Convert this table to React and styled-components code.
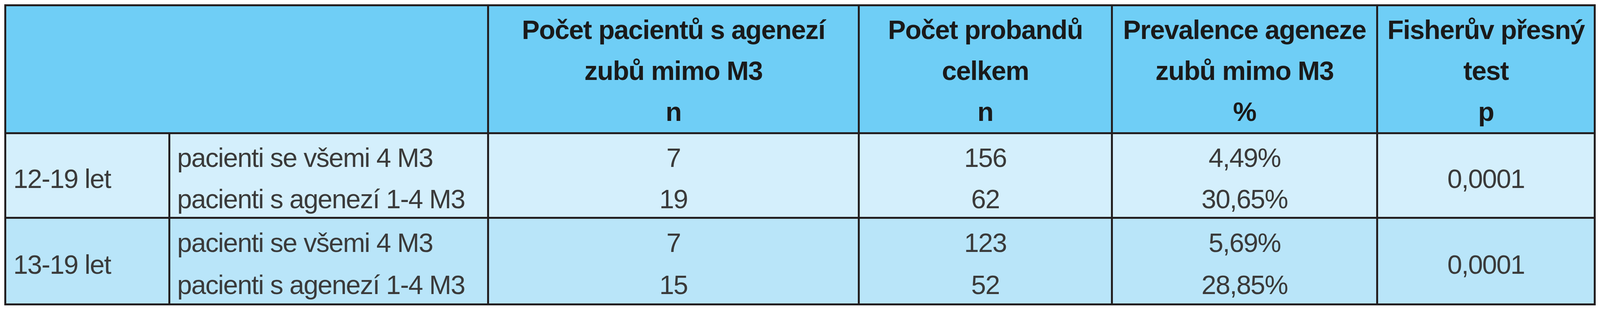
import React from "react"
import styled, { createGlobalStyle } from "styled-components"

const GlobalStyle = createGlobalStyle`
    html, body {
        margin: 0;
        padding: 0;
        background: #ffffff;
    }
    body {
        padding: 11px;
        font-family: "Liberation Sans", Arial, sans-serif;
    }
`

// column widths taken from the reference, used as proportions so the table fills the page
const Table = styled.div`
    display: grid;
    grid-template-columns:
        minmax(0, 423fr) minmax(0, 828fr) minmax(0, 963fr)
        minmax(0, 656fr) minmax(0, 688fr) minmax(0, 563fr);
    grid-template-rows: 323px 212px 217px;
    gap: 5px;
    background: #231f20;
    border: 5px solid #231f20;
`

const HeadCell = styled.div`
    grid-column: ${props => props.$span ? `span ${props.$span}` : "auto"};
    background: #6fcef6;
    color: #1a1a1a;
    font-weight: bold;
    font-size: 68px;
    line-height: 105px;
    letter-spacing: -0.02em;
    text-align: center;
    padding-top: 8px;
    box-sizing: border-box;
    white-space: nowrap;
    overflow: hidden;
`

const Cell = styled.div`
    background: ${props => props.$tone === "dark" ? "#b9e5f9" : "#d4effc"};
    color: #3a3a3a;
    font-size: 68px;
    letter-spacing: -0.025em;
    box-sizing: border-box;
    white-space: nowrap;
`

const SingleCell = styled(Cell)`
    display: flex;
    align-items: center;
    justify-content: ${props => props.$left ? "flex-start" : "center"};
    padding-top: 16px;
    padding-left: ${props => props.$left ? "18px" : "0"};
    line-height: 68px;
`

const PairCell = styled(Cell)`
    display: grid;
    grid-template-rows: 1fr 1fr;
    padding-left: ${props => props.$left ? "18px" : "0"};
`

const Line = styled.div`
    display: flex;
    align-items: center;
    justify-content: ${props => props.$left ? "flex-start" : "center"};
    padding-top: 13px;
    line-height: 68px;
`

const headers = [
    ["Počet pacientů s agenezí", "zubů mimo M3", "n"],
    ["Počet probandů", "celkem", "n"],
    ["Prevalence ageneze", "zubů mimo M3", "%"],
    ["Fisherův přesný", "test", "p"],
]

const groups = [
    {
        age: "12-19 let",
        tone: "light",
        patients: ["7", "19"],
        total: ["156", "62"],
        prevalence: ["4,49%", "30,65%"],
        p: "0,0001",
    },
    {
        age: "13-19 let",
        tone: "dark",
        patients: ["7", "15"],
        total: ["123", "52"],
        prevalence: ["5,69%", "28,85%"],
        p: "0,0001",
    },
]

const labels = ["pacienti se všemi 4 M3", "pacienti s agenezí 1-4 M3"]

const Pair = ({ values, tone, left }) => (
    <PairCell $tone={tone} $left={left}>
        {values.map((v, i) => (
            <Line key={i} $left={left}>{v}</Line>
        ))}
    </PairCell>
)

const App = () => {
    return (
        <>
            <GlobalStyle />
            <Table>
                <HeadCell $span={2} />
                {headers.map((h, i) => (
                    <HeadCell key={i}>
                        {h.map((line, j) => <div key={j}>{line}</div>)}
                    </HeadCell>
                ))}

                {groups.map(g => (
                    <React.Fragment key={g.age}>
                        <SingleCell $tone={g.tone} $left>{g.age}</SingleCell>
                        <Pair values={labels} tone={g.tone} left />
                        <Pair values={g.patients} tone={g.tone} />
                        <Pair values={g.total} tone={g.tone} />
                        <Pair values={g.prevalence} tone={g.tone} />
                        <SingleCell $tone={g.tone}>{g.p}</SingleCell>
                    </React.Fragment>
                ))}
            </Table>
        </>
    )
}

export default App
